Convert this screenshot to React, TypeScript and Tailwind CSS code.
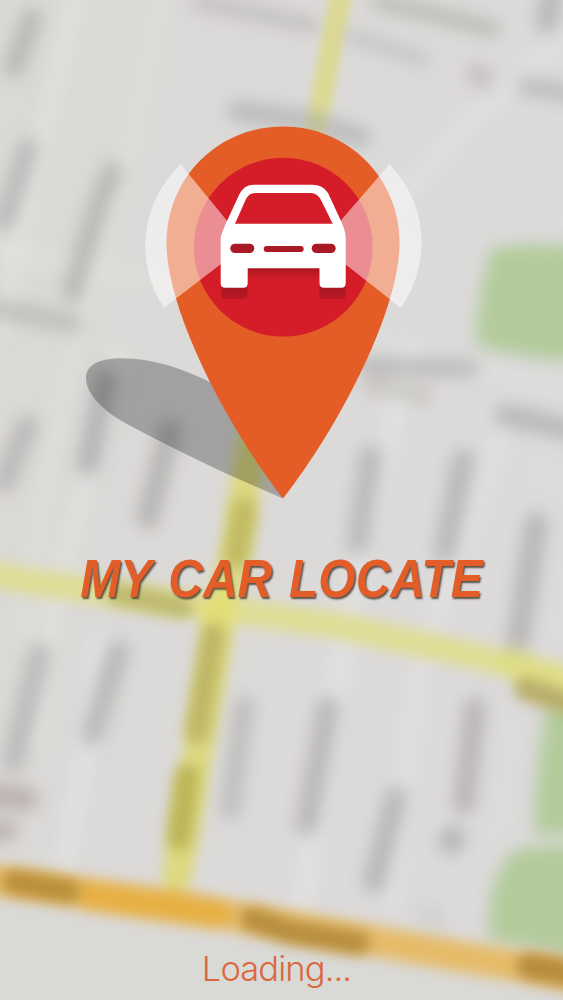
type Smudge = {
  d: string;
  color: string;
  width: number;
  opacity?: number;
};

const GRAY = "#a4a3a2";

// Street names, too far out of focus to read
const streetLabels: Smudge[] = [
  { d: "M32 18L14 68", color: GRAY, width: 20, opacity: 0.6 },
  { d: "M28 148L4 220", color: GRAY, width: 20, opacity: 0.55 },
  { d: "M112 172L98 206L72 292", color: GRAY, width: 20, opacity: 0.6 },
  { d: "M200 2L310 25", color: GRAY, width: 18, opacity: 0.4 },
  { d: "M352 36L423 60", color: GRAY, width: 15, opacity: 0.35 },
  { d: "M380 2L425 12L492 29", color: "#a6aba0", width: 18, opacity: 0.55 },
  { d: "M552 -6L547 22", color: GRAY, width: 22, opacity: 0.6 },
  { d: "M476 73L483 79", color: "#aea5a6", width: 20, opacity: 0.5 },
  { d: "M526 86L580 96", color: GRAY, width: 18, opacity: 0.5 },
  { d: "M238 111L300 120L360 137", color: "#a6a8aa", width: 21, opacity: 0.6 },
  { d: "M-8 308L72 323", color: GRAY, width: 21, opacity: 0.45 },
  { d: "M106 380L88 464", color: GRAY, width: 22, opacity: 0.7 },
  { d: "M27 426L4 482", color: GRAY, width: 22, opacity: 0.55 },
  { d: "M170 430L148 518", color: GRAY, width: 22, opacity: 0.65 },
  { d: "M366 366L470 368", color: GRAY, width: 18, opacity: 0.55 },
  { d: "M370 385L424 395", color: "#b3b1a9", width: 18, opacity: 0.45 },
  { d: "M506 415L576 431", color: GRAY, width: 21, opacity: 0.6 },
  { d: "M371 456L358 544", color: GRAY, width: 22, opacity: 0.6 },
  { d: "M463 460L445 552", color: GRAY, width: 22, opacity: 0.6 },
  { d: "M536 524L518 640", color: GRAY, width: 23, opacity: 0.62 },
  { d: "M40 654L13 762", color: GRAY, width: 22, opacity: 0.55 },
  { d: "M118 652L92 734", color: GRAY, width: 22, opacity: 0.6 },
  { d: "M244 706L230 810", color: GRAY, width: 20, opacity: 0.5 },
  { d: "M328 708L307 824", color: "#a39f9f", width: 22, opacity: 0.62 },
  { d: "M396 798L374 882", color: GRAY, width: 22, opacity: 0.62 },
  { d: "M475 708L464 804", color: "#a39f9f", width: 22, opacity: 0.6 },
  { d: "M453 838L451 842", color: GRAY, width: 24, opacity: 0.65 },
  { d: "M-8 795L26 799", color: "#a8999b", width: 24, opacity: 0.62 },
  { d: "M-10 832L8 830", color: "#a8999b", width: 20, opacity: 0.6 },
  { d: "M426 914L436 918", color: GRAY, width: 18, opacity: 0.2 },
];

// Side streets, slightly lighter than the blocks
const sideStreets: Smudge[] = [
  { d: "M76 0L40 150L0 330", color: "#e6e6e3", width: 20, opacity: 0.5 },
  { d: "M160 0L130 150L60 400L20 640", color: "#e3e3e0", width: 20, opacity: 0.3 },
  { d: "M563 40L470 120L400 200", color: "#e5e4e5", width: 20, opacity: 0.45 },
  { d: "M0 250L200 290L400 350L563 390", color: "#e3e3e1", width: 20, opacity: 0.4 },
  { d: "M410 350L350 600L300 920", color: "#e5e4e5", width: 22, opacity: 0.6 },
  { d: "M500 440L420 660L390 900", color: "#e5e4e5", width: 20, opacity: 0.5 },
  { d: "M120 350L55 600L36 740", color: "#e6e6e4", width: 20, opacity: 0.5 },
  { d: "M100 640L84 760L64 870", color: "#e5e4e5", width: 22, opacity: 0.6 },
];

const upperRoad: Smudge[] = [
  { d: "M342 -10L334 30L318 118L300 200", color: "#dbd994", width: 22 },
];

const roads: Smudge[] = [
  { d: "M262 400L246 480L238 540L222 610L200 740L188 810L177 876", color: "#dcd97f", width: 30 },
  { d: "M-20 573L60 586L220 609L340 626L470 655L590 683", color: "#dfdd94", width: 26 },
  { d: "M514 662L530 676L590 698", color: "#dfdd86", width: 32 },
  { d: "M220 604L216 620", color: "#e2df78", width: 32 },
  { d: "M-20 878L80 892L180 906L250 919L380 942L475 959L590 978", color: "#e5bb68", width: 31 },
  { d: "M90 896L180 909L215 914", color: "#e7b044", width: 30 },
];

const roadLabels: Smudge[] = [
  { d: "M244 510L236 556", color: "#bcb55e", width: 24, opacity: 0.85 },
  { d: "M118 594L182 607", color: "#b8b368", width: 22, opacity: 0.85 },
  { d: "M213 634L197 732", color: "#bbb362", width: 23, opacity: 0.9 },
  { d: "M187 776L179 838", color: "#b9b153", width: 24, opacity: 0.9 },
  { d: "M526 689L580 707", color: "#b5ac69", width: 23, opacity: 0.95 },
  { d: "M14 882L68 891", color: "#b68c37", width: 24, opacity: 0.95 },
  { d: "M252 919L290 932L358 943", color: "#b48b3c", width: 23, opacity: 0.95 },
  { d: "M530 966L590 977", color: "#b3893a", width: 26, opacity: 0.95 },
];

function Smudges({ items }: { items: Smudge[] }) {
  return (
    <>
      {items.map((item) => (
        <path
          key={item.d}
          d={item.d}
          stroke={item.color}
          strokeWidth={item.width}
          strokeOpacity={item.opacity ?? 1}
          fill="none"
          strokeLinejoin="round"
          strokeLinecap="round"
        />
      ))}
    </>
  );
}

function BlurFilter({ id, amount }: { id: string; amount: number }) {
  return (
    <filter
      id={id}
      filterUnits="userSpaceOnUse"
      x="-40"
      y="-40"
      width="643"
      height="1080"
      colorInterpolationFilters="sRGB"
    >
      <feGaussianBlur stdDeviation={amount} />
    </filter>
  );
}

function MapBackdrop() {
  return (
    <svg className="absolute inset-0 h-full w-full" viewBox="0 0 563 1000" aria-hidden="true">
      <defs>
        <linearGradient id="ground" x1="0" y1="0" x2="1" y2="0.25">
          <stop offset="0" stopColor="#dad9d6" />
          <stop offset="0.5" stopColor="#dcdad9" />
          <stop offset="1" stopColor="#dcdada" />
        </linearGradient>
        <BlurFilter id="crisp" amount={4} />
        <BlurFilter id="soft" amount={6.5} />
        <BlurFilter id="softer" amount={8} />
      </defs>
      <rect width="563" height="1000" fill="url(#ground)" />
      <g filter="url(#softer)">
        <path d="M-40 900L180 938L380 962L603 999V1060H-40Z" fill="#d9d9d6" />
        <Smudges items={sideStreets} />
      </g>
      {/* Parks */}
      <g filter="url(#softer)" fill="#b2cb9b">
        <path d="M490 250Q512 240 600 248V362Q520 360 476 344Q474 320 490 250Z" />
        <path d="M546 708L600 690V834H534Q534 780 546 708Z" />
        <path d="M512 852Q530 842 600 848V960L490 940Q484 884 512 852Z" />
      </g>
      <g filter="url(#crisp)">
        <Smudges items={upperRoad} />
      </g>
      <g filter="url(#soft)">
        <Smudges items={roads} />
      </g>
      <g filter="url(#softer)">
        <Smudges items={streetLabels} />
      </g>
      <g filter="url(#soft)">
        <Smudges items={roadLabels} />
      </g>
    </svg>
  );
}

function CarPin() {
  return (
    <svg className="relative h-[510px] w-full" viewBox="0 0 563 510" role="img" aria-label="Car location pin">
      <defs>
        <linearGradient id="underCar" x1="0" y1="0" x2="0" y2="1">
          <stop offset="0" stopColor="#a81620" />
          <stop offset="1" stopColor="#a81620" stopOpacity="0" />
        </linearGradient>
        <linearGradient id="wheelShade" x1="0" y1="0" x2="0" y2="1">
          <stop offset="0.4" stopColor="#a51520" />
          <stop offset="1" stopColor="#ba1924" />
        </linearGradient>
      </defs>

      {/* Cast shadow */}
      <path
        d="M283 498.5L226 473.5C196 459 160 442 125 423C101 409 86 393 86 378C86 365 99 358.3 122 358.3C152 358.3 182 368 214 384L283 498.5Z"
        fill="#000"
        fillOpacity="0.26"
      />

      <path
        d="M283 498.5C223 421 166.5 308 166.5 243C166.5 177 219 126.5 283 126.5C347 126.5 399.5 177 399.5 243C399.5 308 343 421 283 498.5Z"
        fill="#e45d26"
      />
      <circle cx="283.3" cy="247.2" r="89.4" fill="#d51d29" />

      {/* Signal beams */}
      <g fill="#fff" fillOpacity="0.5">
        <path d="M246.5 244.4L180.7 164.3A111.6 111.6 0 0 0 164 307.7Z" />
        <path d="M320.1 244.4L389.5 164.3A112 112 0 0 1 400.7 307.7Z" />
      </g>

      {/* Shade below the car */}
      <rect x="246" y="267" width="75" height="13" fill="url(#underCar)" />
      <rect x="221.5" y="278" width="26" height="21" rx="3" fill="url(#wheelShade)" />
      <rect x="319.5" y="278" width="26" height="21" rx="3" fill="url(#wheelShade)" />

      <path
        fillRule="evenodd"
        fill="#fff"
        d="M253 184.700H312Q323 184.700 328 193L341 221Q345.700 231 345.700 238V283.200Q345.700 287.700 341.200 287.700H324Q319.500 287.700 319.500 283.200V268.300H247.700V283.200Q247.700 287.700 243.200 287.700H225.200Q220.700 287.700 220.700 283.200V238Q220.700 235 227 221L239 195Q244 184.700 253 184.700ZM255 193Q249 193 246 199L235 223.700H332.700L321.500 201Q317.500 193 311 193Z"
      />
      <g fill="#a91a25">
        <rect x="230.3" y="243.7" width="24" height="9.3" rx="4.65" />
        <rect x="311.7" y="243.7" width="24" height="9.3" rx="4.65" />
        <rect x="263.7" y="246" width="40" height="6" rx="3" />
      </g>
    </svg>
  );
}

export default function App() {
  return (
    <main className="relative flex h-[1000px] w-[563px] flex-col items-center overflow-hidden bg-[#dbdad8]">
      <MapBackdrop />
      <CarPin />
      <h1 className="relative mt-[38px] ml-[-1px] origin-center scale-x-[0.888] whitespace-nowrap font-['Liberation_Sans',Arial,sans-serif] text-[54px] leading-[60px] font-bold italic [word-spacing:4px] text-[#e25d28] [text-shadow:1.5px_2px_2px_rgba(60,50,40,0.8)]">
        MY CAR LOCATE
      </h1>
      <p className="relative mt-auto mb-[9px] ml-[-10px] whitespace-nowrap font-['Inter','Liberation_Sans',sans-serif] text-[34.5px] leading-[44px] font-light tracking-[-0.9px] text-[#d9673f]">
        Loading...
      </p>
    </main>
  );
}
